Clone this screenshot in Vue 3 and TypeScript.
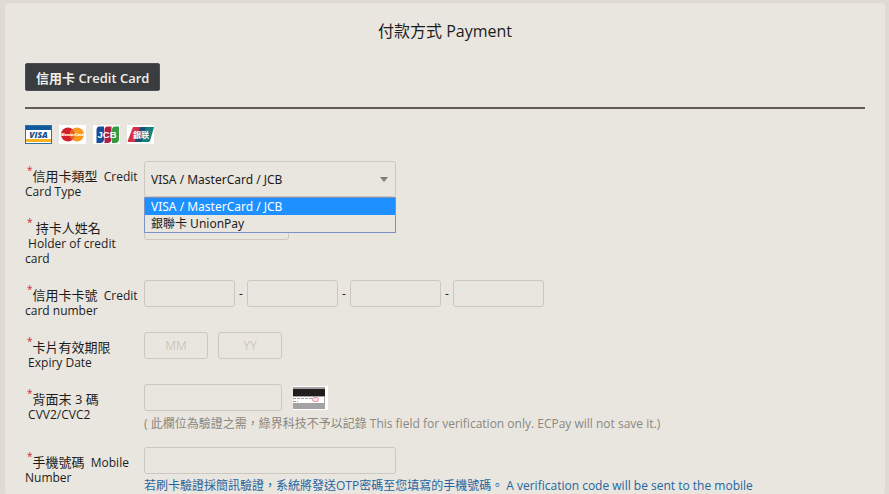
<script setup lang="ts">
import { ref } from 'vue'

interface CardType {
  value: string
  label: string
}

const cardTypes: CardType[] = [
  { value: 'international', label: 'VISA / MasterCard / JCB' },
  { value: 'unionpay', label: '銀聯卡 UnionPay' },
]

const cardType = ref<string>('international')
const listOpen = ref<boolean>(true)
const holder = ref<string>('')
const cardNumber = ref<string[]>(['', '', '', ''])
const month = ref<string>('')
const year = ref<string>('')
const cvv = ref<string>('')
const mobile = ref<string>('')

function pick(value: string): void {
  cardType.value = value
  listOpen.value = false
}
</script>

<template>
  <main class="page">
    <form class="panel" @submit.prevent>
      <h1 class="title">付款方式 Payment</h1>

      <div class="tabs">
        <button type="button" class="tab">信用卡 Credit Card</button>
      </div>

      <div class="brands">
        <svg class="brand" viewBox="0 0 27 19" role="img" aria-label="VISA">
          <rect width="27" height="19" fill="#2f6fa8" />
          <rect x="1" y="1" width="25" height="17" fill="#fff" />
          <rect x="1" y="1" width="25" height="4" fill="#12589c" />
          <rect x="1" y="14" width="25" height="3" fill="#f6b221" />
          <text x="13.5" y="12.8" text-anchor="middle" font-size="8.500" font-weight="800" font-style="italic" fill="#174f8c">VISA</text>
        </svg>
        <svg class="brand" viewBox="0 0 27 19" role="img" aria-label="MasterCard">
          <rect width="27" height="19" fill="#fff" />
          <circle cx="9" cy="9.5" r="7" fill="#d21f2b" />
          <circle cx="18" cy="9.5" r="7" fill="#f99a1c" />
          <path d="M13.5 4.1a7 7 0 0 1 0 10.8a7 7 0 0 1 0-10.8z" fill="#e8612a" />
          <text x="13.5" y="11.2" text-anchor="middle" font-size="4" font-weight="800" font-style="italic" fill="#fff">MasterCard</text>
        </svg>
        <svg class="brand" viewBox="0 0 27 19" role="img" aria-label="JCB">
          <rect width="27" height="19" fill="#fff" />
          <path d="M6.500 1.500H11V14q0 4-4 4H3.500V5q0-3.500 3-3.500z" fill="#174d9b" />
          <path d="M14.500 1.500H18.500V14q0 4-4 4H11.500V5q0-3.500 3-3.500z" fill="#b51e43" />
          <path d="M22 1.500H26V14q0 4-4 4H19V5q0-3.500 3-3.500z" fill="#359b3f" />
          <text x="14" y="13" text-anchor="middle" font-family="Liberation Sans" font-size="9.500" font-weight="700" fill="#fff">JCB</text>
        </svg>
        <svg class="brand" viewBox="0 0 27 19" role="img" aria-label="UnionPay">
          <rect width="27" height="19" fill="#fff" />
          <path d="M6 2h8l-4 15H2q-2 0-1-2z" fill="#d53145" />
          <path d="M13 2h7l-4 15H8z" fill="#174f77" />
          <path d="M19 2h8l-4 14q0 1-2 1h-7z" fill="#12807f" />
          <text x="14" y="12.7" text-anchor="middle" font-size="8" font-weight="700" fill="#fff">銀联</text>
        </svg>
      </div>

      <div class="row">
        <label class="label" for="card-type"><span class="star">*</span><span class="han">信用卡類型</span>&nbsp; Credit Card Type</label>
        <div class="field">
          <div class="picker">
            <select id="card-type" v-model="cardType" class="select">
              <option v-for="t in cardTypes" :key="t.value" :value="t.value">{{ t.label }}</option>
            </select>
            <svg class="arrow" viewBox="0 0 8 5" aria-hidden="true"><path d="M0 0h8l-4 5z" fill="#817e78" /></svg>
            <ul v-if="listOpen" class="options" role="listbox" aria-label="信用卡類型">
              <li
                v-for="t in cardTypes"
                :key="t.value"
                class="option"
                :class="{ active: t.value === cardType }"
                role="option"
                :aria-selected="t.value === cardType"
                @click="pick(t.value)"
              >{{ t.label }}</li>
            </ul>
          </div>
        </div>
      </div>

      <div class="row">
        <label class="label" for="holder"><span class="star">*</span>&nbsp;<span class="han">持卡人姓名</span><br />&nbsp;Holder of credit card</label>
        <div class="field"><input id="holder" v-model="holder" class="input name" type="text" /></div>
      </div>

      <div class="row">
        <label class="label" for="number-1"><span class="star">*</span><span class="han">信用卡卡號</span>&nbsp; Credit card number</label>
        <div class="field digits">
          <template v-for="n in 4" :key="n">
            <span v-if="n > 1" class="dash">-</span>
            <input
              :id="`number-${n}`"
              v-model="cardNumber[n - 1]"
              class="input quad"
              type="text"
              maxlength="4"
              :aria-label="`信用卡卡號 ${n}`"
            />
          </template>
        </div>
      </div>

      <div class="row">
        <label class="label" for="month"><span class="star">*</span><span class="han">卡片有效期限</span><br />&nbsp;Expiry Date</label>
        <div class="field expiry">
          <input id="month" v-model="month" class="input short" type="text" placeholder="MM" maxlength="2" />
          <input id="year" v-model="year" class="input short" type="text" placeholder="YY" maxlength="2" aria-label="YY" />
        </div>
      </div>

      <div class="row">
        <label class="label" for="cvv"><span class="star">*</span><span class="han">背面末 3 碼</span><br />&nbsp;CVV2/CVC2</label>
        <div class="field">
          <div class="code">
            <input id="cvv" v-model="cvv" class="input cvv" type="text" maxlength="3" />
            <svg class="back" viewBox="0 0 35 24" aria-hidden="true">
              <rect width="35" height="24" fill="#fff" />
              <rect y="1" width="32" height="22" fill="#a3a3a6" />
              <rect y="3" width="32" height="7" fill="#211c1d" />
              <rect y="11" width="31" height="6" fill="#fff" />
              <path d="M0 12.500h19M0 15.500h5" stroke="#a5a0a0" stroke-dasharray="3 1" />
              <rect x="19.500" y="11.500" width="6" height="4" rx="2" fill="#fbe3e8" stroke="#e78a9d" />
            </svg>
          </div>
          <p class="hint">( 此欄位為驗證之需，綠界科技不予以記錄 This field for verification only. ECPay will not save it.)</p>
        </div>
      </div>

      <div class="row">
        <label class="label" for="mobile"><span class="star">*</span><span class="han">手機號碼</span>&nbsp; Mobile Number</label>
        <div class="field">
          <input id="mobile" v-model="mobile" class="input wide" type="tel" />
          <p class="hint notice">若刷卡驗證採簡訊驗證，系統將發送OTP密碼至您填寫的手機號碼。 A verification code will be sent to the mobile</p>
        </div>
      </div>
    </form>
  </main>
</template>

<style>
html {
  scrollbar-width: none;
}
body {
  background: #dfdbd4;
}
</style>

<style scoped>
.page {
  padding: 3px 4px 0 5px;
  font-family: 'Open Sans', 'Noto Sans CJK TC', sans-serif;
  font-size: 12px;
  line-height: 15px;
  color: #1c1c1c;
}
.panel {
  padding: 16px 20px 0;
  border-radius: 4px;
  background: #e9e6df;
}
.title {
  margin: 0;
  font-size: 16px;
  font-weight: 400;
  line-height: 24px;
  text-align: center;
}
.tabs {
  display: flex;
  margin-top: 20px;
  padding-bottom: 16px;
  border-bottom: 2px solid #645c56;
}
.tab {
  height: 28px;
  padding: 0 10px;
  border: 1px solid #4d5052;
  border-radius: 2px;
  background: #3a3d3f;
  color: #f1efea;
  font-family: inherit;
  font-size: 13px;
  font-weight: 600;
}
.brands {
  display: flex;
  gap: 7px;
  margin: 16px 0 17px;
}
.brand {
  width: 27px;
  height: 19px;
}
.row {
  display: grid;
  grid-template-columns: 119px 1fr;
  margin-bottom: 14px;
}
.label {
  padding: 8px 5px 0 0;
}
.star {
  padding-left: 2px;
  color: #d8232f;
  font-size: 10px;
  line-height: 0;
  vertical-align: 7px;
}
.han {
  font-size: 13px;
  line-height: 0;
}
.field {
  min-width: 0;
  height: min-content;
}
.input,
.select {
  box-sizing: border-box;
  display: block;
  height: 27px;
  padding: 0 6px;
  border: 1px solid #cbc8c1;
  border-radius: 3px;
  background: transparent;
  color: inherit;
  font: inherit;
}
.picker {
  position: relative;
  width: 252px;
  height: 36px;
  font-family: 'Noto Sans', 'Noto Sans CJK TC', sans-serif;
}
.select {
  width: 100%;
  height: 36px;
  appearance: none;
}
.arrow {
  position: absolute;
  top: 16px;
  right: 8px;
  width: 8px;
  height: 5px;
  pointer-events: none;
}
.options {
  position: absolute;
  z-index: 1;
  top: 36px;
  left: 0;
  right: 0;
  margin: 0;
  padding: 0;
  border: 1px solid #7b92c6;
  background: #e9e6df;
  list-style: none;
}
.option {
  padding: 0 6px;
  line-height: 17px;
}
.option.active {
  background: #1e90ff;
  color: #fff;
}
.name {
  width: 145px;
}
.digits,
.expiry,
.code {
  display: flex;
  align-items: center;
}
.quad {
  width: 91px;
}
.dash {
  width: 12px;
  text-align: center;
}
.expiry {
  gap: 10px;
}
.short {
  width: 64px;
  text-align: center;
}
.input::placeholder {
  color: #c9c6bf;
  opacity: 1;
}
.code {
  gap: 11px;
}
.cvv {
  width: 138px;
}
.back {
  width: 35px;
  height: 24px;
}
.wide {
  width: 252px;
}
.hint {
  margin: 4px 0 0;
  line-height: 18px;
  color: #8a8881;
}
.notice {
  margin-top: 3px;
  color: #2465a0;
}
</style>
